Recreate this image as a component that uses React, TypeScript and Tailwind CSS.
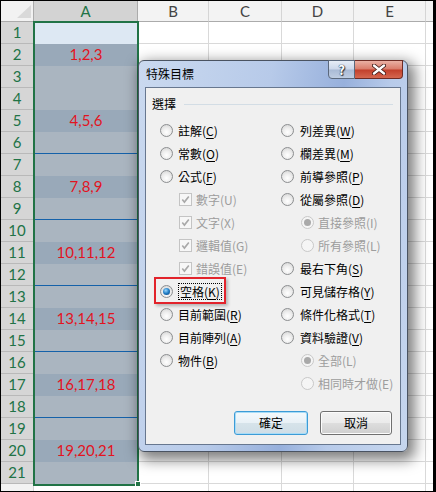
import React from 'react';

type Opt = {
  t: string;
  k: string;
  kind: 'radio' | 'check';
  indent?: boolean;
  disabled?: boolean;
  checked?: boolean;
  focus?: boolean;
};

const leftOpts: Opt[] = [
  { t: '註解', k: 'C', kind: 'radio' },
  { t: '常數', k: 'O', kind: 'radio' },
  { t: '公式', k: 'F', kind: 'radio' },
  { t: '數字', k: 'U', kind: 'check', indent: true, disabled: true, checked: true },
  { t: '文字', k: 'X', kind: 'check', indent: true, disabled: true, checked: true },
  { t: '邏輯值', k: 'G', kind: 'check', indent: true, disabled: true, checked: true },
  { t: '錯誤值', k: 'E', kind: 'check', indent: true, disabled: true, checked: true },
  { t: '空格', k: 'K', kind: 'radio', checked: true, focus: true },
  { t: '目前範圍', k: 'R', kind: 'radio' },
  { t: '目前陣列', k: 'A', kind: 'radio' },
  { t: '物件', k: 'B', kind: 'radio' },
];

const rightOpts: Opt[] = [
  { t: '列差異', k: 'W', kind: 'radio' },
  { t: '欄差異', k: 'M', kind: 'radio' },
  { t: '前導參照', k: 'P', kind: 'radio' },
  { t: '從屬參照', k: 'D', kind: 'radio' },
  { t: '直接參照', k: 'I', kind: 'radio', indent: true, disabled: true, checked: true },
  { t: '所有參照', k: 'L', kind: 'radio', indent: true, disabled: true },
  { t: '最右下角', k: 'S', kind: 'radio' },
  { t: '可見儲存格', k: 'Y', kind: 'radio' },
  { t: '條件化格式', k: 'T', kind: 'radio' },
  { t: '資料驗證', k: 'V', kind: 'radio' },
  { t: '全部', k: 'L', kind: 'radio', indent: true, disabled: true, checked: true },
  { t: '相同時才做', k: 'E', kind: 'radio', indent: true, disabled: true },
];

const labels: Record<number, string> = {
  2: '1,2,3',
  5: '4,5,6',
  8: '7,8,9',
  11: '10,11,12',
  14: '13,14,15',
  17: '16,17,18',
  20: '19,20,21',
};
const blueLines = [6, 9, 12, 15, 18];

function Radio({ checked, disabled }: { checked?: boolean; disabled?: boolean }) {
  return (
    <span
      className={`flex h-[13px] w-[13px] shrink-0 items-center justify-center rounded-full border ${
        disabled
          ? 'border-[#c8c8c8] bg-[#f5f5f5]'
          : 'border-[#8c8e90] bg-[radial-gradient(circle_at_50%_65%,#ffffff_0%,#eeeeee_45%,#cfcfcf_100%)]'
      }`}
    >
      {checked && (
        <span
          className={`h-[7px] w-[7px] rounded-full ${
            disabled
              ? 'bg-[#a9a9a9]'
              : 'bg-[radial-gradient(circle_at_40%_35%,#9ad8ff_0%,#1f7cc4_50%,#0b3c75_100%)]'
          }`}
        />
      )}
    </span>
  );
}

function Check() {
  return (
    <span className="flex h-[13px] w-[13px] shrink-0 items-center justify-center border border-[#c4c4c4] bg-[#f7f7f7]">
      <svg width="9" height="9" viewBox="0 0 9 9">
        <path d="M1.3 4.6 L3.4 7.1 L7.8 1.4" fill="none" stroke="#a9a9a9" strokeWidth="1.6" />
      </svg>
    </span>
  );
}

function Option({ o, side }: { o: Opt; side: 'left' | 'right' }) {
  const pad = o.indent ? (side === 'left' ? 'pl-[19px]' : 'pl-[20px]') : 'pl-0';
  const gap = o.kind === 'check' ? 'gap-[4px]' : o.indent ? 'gap-[4px]' : side === 'left' ? 'gap-[5px]' : 'gap-[6px]';
  return (
    <div className={`relative flex h-[23px] items-center ${pad} ${gap}`}>
      {o.kind === 'radio' ? <Radio checked={o.checked} disabled={o.disabled} /> : <Check />}
      <span
        className={`whitespace-nowrap leading-[15px] ${o.disabled ? 'text-[#9d9d9d]' : 'text-black'} ${
          o.focus ? 'border border-dotted border-black px-px' : ''
        }`}
      >
        {o.t}(
        {o.disabled ? o.k : <span className="underline underline-offset-[2px]">{o.k}</span>})
      </span>
      {o.focus && (
        <div className="absolute left-[-6px] top-[-3px] h-[27px] w-[72px] border-2 border-[#e2232b] shadow-[2px_2px_3px_rgba(0,0,0,0.25)]" />
      )}
    </div>
  );
}

function Dialog() {
  return (
    <div className="absolute left-[137px] top-[59px] flex h-[392px] w-[270px] flex-col rounded-[6px] border border-[#4a5361] bg-[linear-gradient(100deg,#cad9ef_0%,#b7cae9_40%,#97b0dc_62%,#b8cbea_76%,#c6d6ee_100%)] font-['Noto_Sans_CJK_TC','Noto_Sans',sans-serif] text-[12px] shadow-[4px_5px_14px_3px_rgba(0,0,0,0.5)]">
      <div className="relative flex h-[26px] items-center pl-[7px] text-black">
        特殊目標
        <div className="absolute right-[4px] top-[-1px] flex">
          <div className="flex h-[19px] w-[27px] items-center justify-center rounded-bl-[4px] border border-[#5b687c] bg-[linear-gradient(to_bottom,#e6edf7_0%,#cbd7ea_48%,#a9bad5_52%,#bfcde2_100%)] text-[13px] font-bold leading-none text-white [text-shadow:0_0_1px_#2c3644,0_0_1px_#2c3644,1px_1px_1px_#2c3644]">
            ?
          </div>
          <div className="flex h-[19px] w-[48px] items-center justify-center rounded-br-[4px] border border-l-0 border-[#6e2b24] bg-[linear-gradient(to_bottom,#eab0a4_0%,#d97b6a_48%,#c23f2b_52%,#d5674f_100%)]">
            <svg width="14" height="11" viewBox="0 0 14 11">
              <path d="M2 1.5 L12 9.5 M12 1.5 L2 9.5" stroke="#3a1410" strokeWidth="4" strokeLinecap="round" />
              <path d="M2 1.5 L12 9.5 M12 1.5 L2 9.5" stroke="#ffffff" strokeWidth="2.4" strokeLinecap="round" />
            </svg>
          </div>
        </div>
      </div>
      <div className="mx-[6px] mb-[6px] flex flex-1 flex-col border border-[#67778f] bg-[#f0f0f0]">
        <div className="mt-[8px] flex h-[16px] items-center pl-[6px] pr-[7px]">
          <span className="text-black">選擇</span>
          <div className="ml-[8px] h-px flex-1 bg-[#d3dde5]" />
        </div>
        <div className="mt-[7px] flex">
          <div className="flex w-[135px] flex-col pl-[14px]">
            {leftOpts.map((o) => (
              <Option key={o.t} o={o} side="left" />
            ))}
          </div>
          <div className="flex flex-col">
            {rightOpts.map((o) => (
              <Option key={o.t} o={o} side="right" />
            ))}
          </div>
        </div>
        <div className="flex-1" />
        <div className="flex justify-end gap-[12px] pb-[9px] pr-[8px]">
          <button className="h-[24px] w-[74px] rounded-[3px] border border-[#3c9bd6] bg-[linear-gradient(to_bottom,#f4f9fc_0%,#e9f1f6_48%,#d6e3ea_52%,#cfdde6_100%)] text-black shadow-[inset_0_0_0_1px_#a8dcf7]">
            確定
          </button>
          <button className="h-[24px] w-[72px] rounded-[3px] border border-[#707070] bg-[linear-gradient(to_bottom,#f2f2f2_0%,#ebebeb_48%,#dddddd_52%,#cfcfcf_100%)] text-black shadow-[inset_0_0_0_1px_#fcfcfc]">
            取消
          </button>
        </div>
      </div>
    </div>
  );
}

export default function App() {
  const rows = Array.from({ length: 22 }, (_, i) => i + 1);
  return (
    <div className="relative h-[492px] w-[436px] overflow-hidden border border-r-[3px] border-black bg-white font-['Lato',sans-serif]">
      {/* column headers */}
      <div className="flex h-[21px] text-[15px]">
        <div className="relative w-[33px] border-b border-r border-[#ababab] bg-[#f2f2f2]">
          <svg className="absolute right-[2px] bottom-[3px]" width="14" height="13" viewBox="0 0 14 13">
            <polygon points="14,0 14,13 0,13" fill="#d9d9d9" />
          </svg>
        </div>
        <div className="flex w-[104px] items-center justify-center border-b border-r border-[#ababab] bg-[#d3d3d3] text-[#217346]">A</div>
        <div className="flex w-[71px] items-center justify-center border-b border-r border-b-[#ababab] border-r-[#d5d5d5] bg-[#f3f3f3] text-[#444]">B</div>
        <div className="flex w-[73px] items-center justify-center border-b border-r border-b-[#ababab] border-r-[#d5d5d5] bg-[#f3f3f3] text-[#444]">C</div>
        <div className="flex w-[72px] items-center justify-center border-b border-r border-b-[#ababab] border-r-[#d5d5d5] bg-[#f3f3f3] text-[#444]">D</div>
        <div className="flex w-[72px] items-center justify-center border-b border-r border-b-[#ababab] border-r-[#d5d5d5] bg-[#f3f3f3] text-[#444]">E</div>
        <div className="flex-1 border-b border-[#ababab] bg-[#f3f3f3]" />
      </div>
      {rows.map((r) => {
        const sel = r <= 21;
        const dark = labels[r] !== undefined;
        const blue = blueLines.includes(r);
        const aBg = !sel ? 'bg-white' : r === 1 ? 'bg-[#dde8f3]' : dark ? 'bg-[#99a9b9]' : 'bg-[#aab5c0]';
        const aBorder = blue ? 'border-[#1561a9]' : !sel ? 'border-[#d9d9d9]' : r === 1 ? 'border-[#dde8f3]' : dark ? 'border-[#99a9b9]' : 'border-[#aab5c0]';
        return (
          <div key={r} className="flex h-[22px] text-[15px]">
            <div
              className={`flex w-[33px] items-center justify-center border-b border-r ${
                sel ? 'border-[#b9b9b9] bg-[#d6d6d6] text-[#217346]' : 'border-[#d5d5d5] bg-[#f3f3f3] text-[#444]'
              }`}
            >
              {sel ? r : ''}
            </div>
            <div className={`flex w-[104px] items-center justify-center border-b text-[#e2141f] ${aBg} ${aBorder}`}>
              {labels[r] ?? ''}
            </div>
            <div className="w-[71px] border-b border-r border-[#d9d9d9]" />
            <div className="w-[73px] border-b border-r border-[#d9d9d9]" />
            <div className="w-[72px] border-b border-r border-[#d9d9d9]" />
            <div className="w-[72px] border-b border-r border-[#d9d9d9]" />
            <div className="flex-1 border-b border-[#d9d9d9]" />
          </div>
        );
      })}
      {/* selection outline over column A */}
      <div className="absolute left-[32px] top-[20px] h-[465px] w-[106px] border-2 border-[#217346]" />
      <div className="absolute left-[134px] top-[480px] h-[6px] w-[6px] border border-white bg-[#217346]" />
      <Dialog />
    </div>
  );
}
